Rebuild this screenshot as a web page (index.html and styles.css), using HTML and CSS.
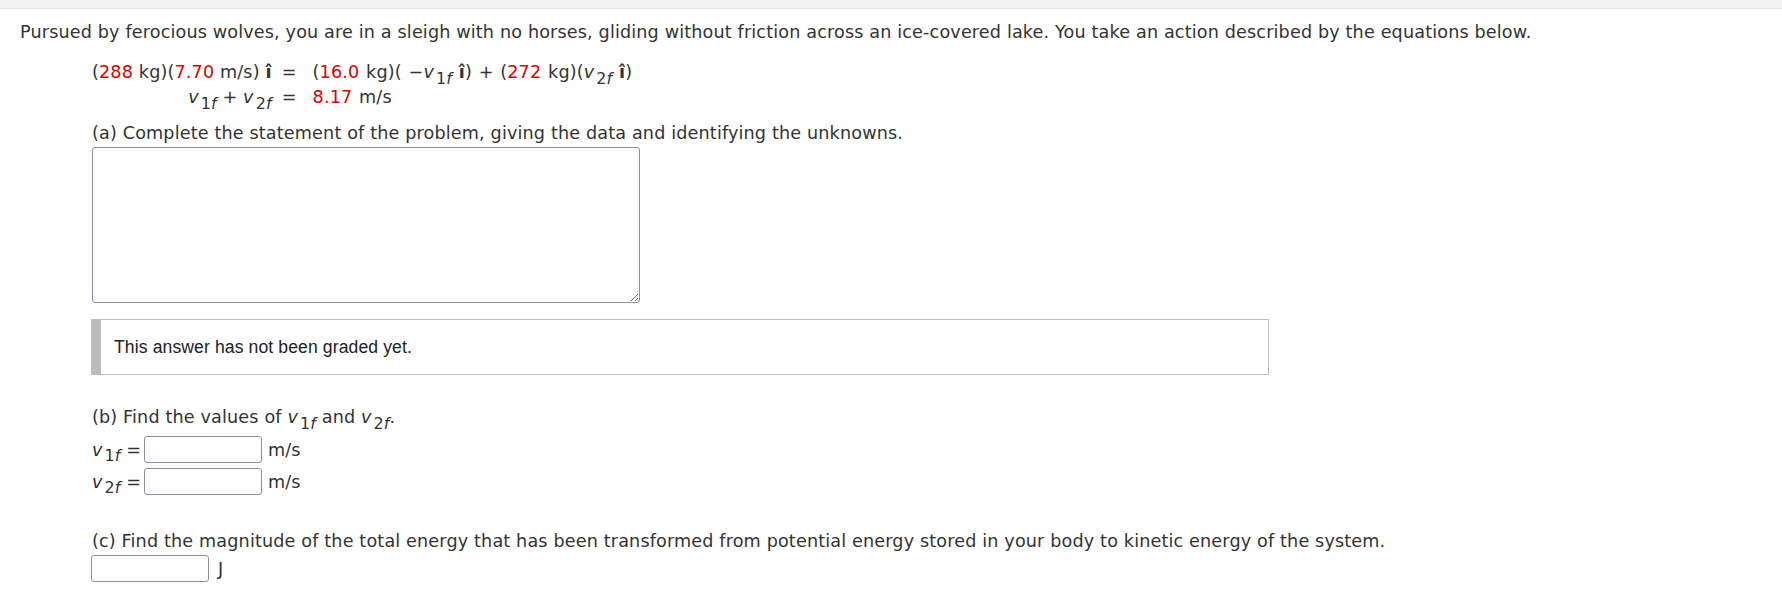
FILE: index.html
```html
<!DOCTYPE html>
<html>
<head>
<meta charset="utf-8">
<link rel="stylesheet" href="styles.css">
</head>
<body>
<div class="topbar"></div>
<div class="content">
  <p class="intro">Pursued by ferocious wolves, you are in a sleigh with no horses, gliding without friction across an ice-covered lake. You take an action described by the equations below.</p>
  <div class="eqs">
    <div class="lhs">(<span class="red">288</span> kg)(<span class="red">7.70</span> m/s) <b class="hat">î</b></div>
    <div class="eq">=</div>
    <div class="rhs">(<span class="red">16.0</span> kg)( −<i>v</i><span class="sub">1<i>f</i></span> <b class="hat">î</b>) + (<span class="red">272</span> kg)(<i>v</i><span class="sub">2<i>f</i></span> <b class="hat">î</b>)</div>
    <div class="lhs"><i>v</i><span class="sub">1<i>f</i></span> + <i>v</i><span class="sub">2<i>f</i></span></div>
    <div class="eq">=</div>
    <div class="rhs"><span class="red">8.17</span> m/s</div>
  </div>
  <div class="part">
    <p class="q">(a) Complete the statement of the problem, giving the data and identifying the unknowns.</p>
    <textarea class="answer"></textarea>
    <div class="grade"><span>This answer has not been graded yet.</span></div>
    <p class="q qb">(b) Find the values of <i>v</i><span class="sub">1<i>f</i></span> and <i>v</i><span class="sub">2<i>f</i></span>.</p>
    <div class="row"><span class="lbl"><i>v</i><span class="sub">1<i>f</i></span> =</span><input class="box" type="text"><span class="unit">m/s</span></div>
    <div class="row row2"><span class="lbl"><i>v</i><span class="sub">2<i>f</i></span> =</span><input class="box" type="text"><span class="unit">m/s</span></div>
    <p class="q qc">(c) Find the magnitude of the total energy that has been transformed from potential energy stored in your body to kinetic energy of the system.</p>
    <div class="row rowc"><input class="box" type="text"><span class="unit unit-j">J</span></div>
  </div>
</div>
</body>
</html>
```
FILE: styles.css
```css
html, body {
  margin: 0;
  padding: 0;
  background: #fff;
}
body {
  font-family: "DejaVu Sans", Verdana, sans-serif;
  font-size: 17.6px;
  letter-spacing: 0.15px;
  color: #333;
}
.topbar {
  height: 8px;
  background: #f4f4f4;
  border-bottom: 1px solid #e2e2e2;
}
.content {
  padding: 0 20px;
}
.intro {
  margin: 12px 0 0 0;
  line-height: 22px;
}
.red {
  color: #e00000;
}
.hat {
  font-weight: bold;
}
i {
  font-style: italic;
}
.sub {
  font-size: 0.9em;
  position: relative;
  top: 0.35em;
  margin-left: 2px;
}
.eqs {
  display: grid;
  grid-template-columns: auto auto auto;
  justify-content: start;
  margin: 17px 0 0 72px;
  line-height: 25px;
}
.lhs {
  justify-self: end;
}
.eq {
  margin: 0 16px 0 10px;
}
.rhs {
  word-spacing: 1px;
}
.part {
  margin-left: 72px;
}
.q {
  margin: 12px 0 0 0;
  line-height: 22px;
}
.answer {
  display: block;
  box-sizing: border-box;
  width: 548px;
  height: 156px;
  margin-top: 3px;
  border: 1px solid #8f8f9d;
  border-radius: 3px;
  resize: both;
  font-family: inherit;
}
.grade {
  box-sizing: border-box;
  width: 1178px;
  height: 56px;
  margin: 16px 0 0 -1px;
  border: 1px solid #bdbdbd;
  border-left: 10px solid #bdbdbd;
  padding-left: 13px;
  display: flex;
  align-items: center;
  font-family: "Liberation Sans", Arial, sans-serif;
  font-size: 17.6px;
  letter-spacing: 0.1px;
  color: #222;
}
.qb {
  margin-top: 31px;
}
.row {
  display: flex;
  align-items: center;
  height: 27px;
  margin-top: 7px;
}
.row2 {
  margin-top: 5px;
}
.lbl {
  width: 52px;
  white-space: nowrap;
}
.box {
  box-sizing: border-box;
  width: 118px;
  height: 27px;
  margin: 0;
  border: 1px solid #8f8f9d;
  border-radius: 3px;
  background: #fff;
  padding: 0;
}
.unit {
  margin-left: 6px;
}
.unit-j {
  margin-left: 9px;
}
.qc {
  margin-top: 35px;
}
.rowc {
  margin-top: 3px;
  margin-left: -1px;
}
```
